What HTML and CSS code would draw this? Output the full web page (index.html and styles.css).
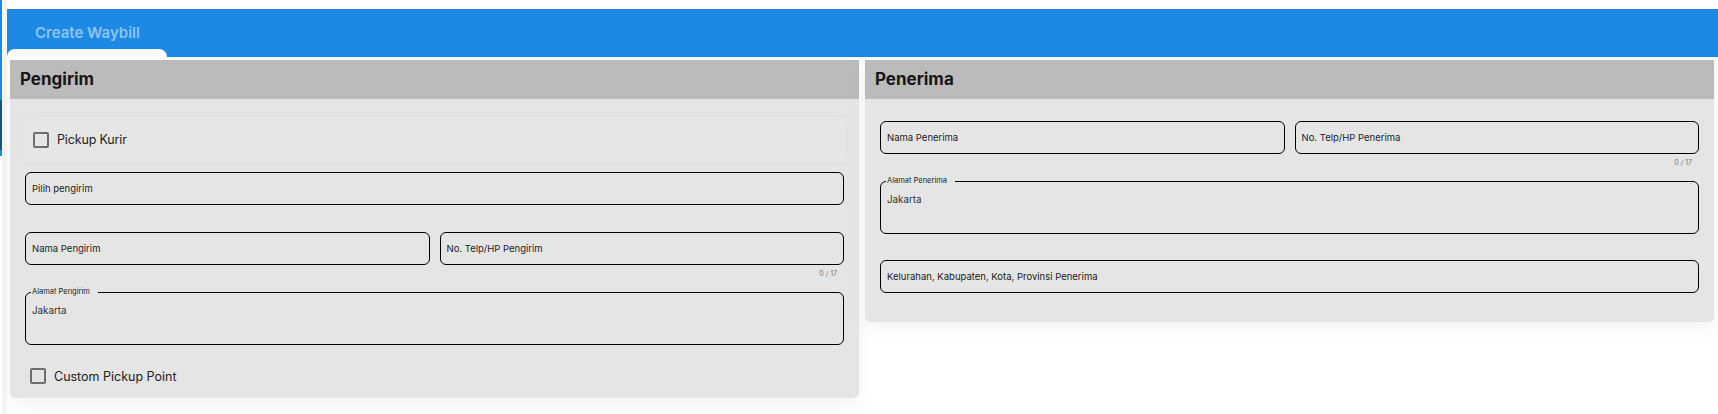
FILE: index.html
```html
<!DOCTYPE html>
<html lang="id">
<head>
<meta charset="utf-8">
<title>Create Waybill</title>
<link rel="stylesheet" href="styles.css">
</head>
<body>
<div class="edge"></div>
<div class="page">
  <nav class="tabbar">
    <div class="tab">
      <span class="tab-label">Create Waybill</span>
      <span class="tab-shape"></span>
    </div>
  </nav>
  <main class="cards">
    <section class="card">
      <h2 class="card-title">Pengirim</h2>
      <div class="card-body">
        <label class="pickup"><input class="check" type="checkbox"><span>Pickup Kurir</span></label>
        <div class="field field-select"><span>Pilih pengirim</span></div>
        <div class="row">
          <div class="field"><span>Nama Pengirim</span></div>
          <div class="phone">
            <div class="field"><span>No. Telp/HP Pengirim</span></div>
            <div class="helper">0 / 17</div>
          </div>
        </div>
        <fieldset class="area">
          <legend>Alamat Pengirim</legend>
          <span>Jakarta</span>
        </fieldset>
        <label class="custom"><input class="check" type="checkbox"><span>Custom Pickup Point</span></label>
      </div>
    </section>
    <section class="card">
      <h2 class="card-title">Penerima</h2>
      <div class="card-body card-body-right">
        <div class="row">
          <div class="field"><span>Nama Penerima</span></div>
          <div class="phone">
            <div class="field"><span>No. Telp/HP Penerima</span></div>
            <div class="helper">0 / 17</div>
          </div>
        </div>
        <fieldset class="area">
          <legend>Alamat Penerima</legend>
          <span>Jakarta</span>
        </fieldset>
        <div class="field field-last"><span>Kelurahan, Kabupaten, Kota, Provinsi Penerima</span></div>
      </div>
    </section>
  </main>
</div>
</body>
</html>
```
FILE: styles.css
```css
* { box-sizing: border-box; }
html, body { margin: 0; height: 414px; overflow: hidden; background: #fff; }
body {
  font-family: Inter, "Liberation Sans", sans-serif;
  color: #222;
  display: flex;
}
.edge {
  width: 2px;
  flex: none;
  height: 414px;
  background: linear-gradient(#1e88e5 0, #1e88e5 100px, #0b5a8c 100px, #0b5a8c 150px, #1e88e5 150px, #1e88e5 156px, #fff 156px);
}
.page {
  flex: 1;
  min-width: 0;
  padding-top: 9px;
  background: linear-gradient(90deg, #f5f5f5 0, #f5f5f5 5px, #fff 5px);
}
.tabbar {
  margin-left: 5px;
  height: 48px;
  background: #1e88e5;
  display: flex;
  align-items: flex-end;
}
.tab {
  width: 160px;
  display: flex;
  flex-direction: column;
}
.tab-label {
  height: 40px;
  padding: 15px 0 0 28px;
  font-size: 15px;
  line-height: 18px;
  font-weight: 600;
  color: #8cc4f4;
}
.tab-shape {
  height: 8px;
  background: #fff;
  border-radius: 8px 8px 0 0;
}
.cards {
  display: flex;
  align-items: flex-start;
  gap: 6px;
  padding: 3px 4px 0 8px;
}
.card {
  flex: 1;
  min-width: 0;
  background: #e5e5e5;
  border-radius: 0 0 5px 5px;
  box-shadow: 0 6px 18px rgba(0, 0, 0, .05);
}
.card-title {
  margin: 0;
  height: 39px;
  padding: 0 10px;
  background: #bbb;
  color: #161616;
  font-size: 17px;
  font-weight: 700;
  line-height: 38px;
}
.card-body { padding: 18px 15px 0; height: 299px; }
.card-body-right { padding-top: 22px; height: 223px; }
.pickup {
  display: flex;
  align-items: center;
  gap: 8px;
  height: 45px;
  margin: 0 -2px 10px;
  padding-left: 10px;
  border-radius: 5px;
  background: #e6e6e6;
  box-shadow: 0 0 10px rgba(0, 0, 0, .03);
  font-size: 12.5px;
  letter-spacing: -.15px;
  color: #222;
}
.check {
  appearance: none;
  width: 16px;
  height: 16px;
  margin: 0;
  flex: none;
  background: transparent;
  border: 2px solid #6e6e6e;
  border-radius: 2px;
}
.field {
  height: 33px;
  display: flex;
  align-items: center;
  padding: 0 6px 1px;
  border: 1.5px solid #000;
  border-radius: 6px;
  font-size: 9.5px;
  color: #222;
}
.field-select { margin-bottom: 27px; }
.field-last { margin-top: 26px; }
.row {
  display: grid;
  grid-template-columns: 1fr 1fr;
  gap: 10px;
}
.helper {
  height: 26px;
  padding: 4px 7px 0 0;
  text-align: right;
  font-size: 7px;
  line-height: 10px;
  color: #777;
}
.area {
  margin: -4px 0 0;
  padding: 0 6px;
  min-width: 0;
  height: 58px;
  border: 1.5px solid #000;
  border-radius: 6px;
  font-size: 9.8px;
  line-height: 14px;
  color: #333;
}
.area legend {
  margin-left: -1px;
  padding: 0 8px 0 1px;
  height: 10px;
  font-size: 7.5px;
  line-height: 10px;
  color: #222;
}
.area span { display: block; padding-top: 7px; }
.custom {
  display: flex;
  align-items: center;
  gap: 8px;
  margin: 23px 0 0 5px;
  font-size: 12.5px;
  color: #222;
}
```
